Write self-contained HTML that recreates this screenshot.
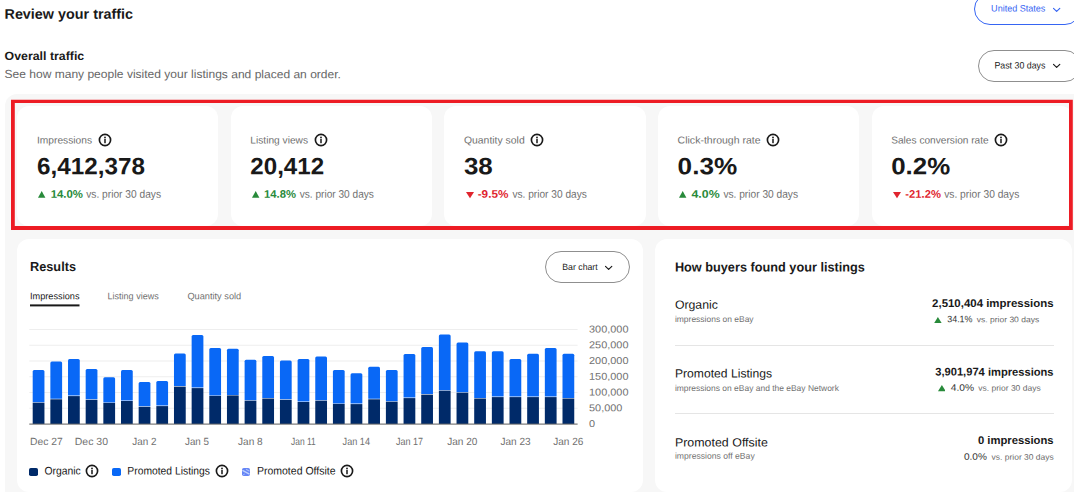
<!DOCTYPE html>
<html lang="en"><head><meta charset="utf-8"><title>Review your traffic</title>
<style>
html,body{margin:0;padding:0}
body{width:1074px;height:492px;position:relative;overflow:hidden;background:#fff;font-family:"Liberation Sans",sans-serif}
.a,.t,.pill,.card{position:absolute}
.t{white-space:nowrap}
.tx{font-family:"Liberation Sans",sans-serif;text-rendering:geometricPrecision;pointer-events:none}
.tx text{white-space:pre}
.pill{box-sizing:border-box;border:1px solid #8f8f8f;border-radius:16px;background:#fff}
.card{background:#fff;border-radius:12px}
.ii{position:absolute;top:-2px;margin-left:4.5px}
.lab{overflow:visible}
b{font-weight:700}
</style></head><body>
<div class="pill" style="left:974px;top:-7.5px;width:107px;height:32px;border-color:#3665f3"></div>
<svg class="a" style="left:1051.9px;top:6.5px" width="10" height="7" viewBox="-1 -1 10 7"><path d="M0.5 0.3 L3.65 3.4 L6.8 0.3" fill="none" stroke="#3665f3" stroke-width="1.15" stroke-linecap="round" stroke-linejoin="round"/></svg>
<div class="pill" style="left:977.7px;top:50px;width:103px;height:32px;border-color:#8f8f8f"></div>
<svg class="a" style="left:1051.9px;top:62.6px" width="10" height="7" viewBox="-1 -1 10 7"><path d="M0.5 0.3 L3.65 3.4 L6.8 0.3" fill="none" stroke="#191919" stroke-width="1.15" stroke-linecap="round" stroke-linejoin="round"/></svg>
<div class="a" style="left:4.5px;top:94px;width:1100px;height:420px;background:#f7f7f7;border-radius:12px"></div>
<div class="card" style="left:17.00px;top:106px;width:201.3px;height:119.8px"></div>
<svg class="a" style="left:97.7px;top:133.1px" width="14" height="14" viewBox="-7 -7 14 14"><circle r="5.6" fill="none" stroke="#191919" stroke-width="1.65"/><circle cy="-2.5" r="0.9" fill="#191919"/><rect x="-0.75" y="-1.0" width="1.5" height="4.2" fill="#191919"/></svg>
<svg class="a" style="left:38.40px;top:191.4px" width="7.4" height="7" viewBox="0 0 7.4 7"><path d="M3.7 0 L7.4 6.7 L0 6.7 Z" fill="#288a3a"/></svg>
<div class="card" style="left:230.65px;top:106px;width:201.3px;height:119.8px"></div>
<svg class="a" style="left:313.6px;top:133.1px" width="14" height="14" viewBox="-7 -7 14 14"><circle r="5.6" fill="none" stroke="#191919" stroke-width="1.65"/><circle cy="-2.5" r="0.9" fill="#191919"/><rect x="-0.75" y="-1.0" width="1.5" height="4.2" fill="#191919"/></svg>
<svg class="a" style="left:252.40px;top:191.4px" width="7.4" height="7" viewBox="0 0 7.4 7"><path d="M3.7 0 L7.4 6.7 L0 6.7 Z" fill="#288a3a"/></svg>
<div class="card" style="left:444.30px;top:106px;width:201.3px;height:119.8px"></div>
<svg class="a" style="left:529.8px;top:133.1px" width="14" height="14" viewBox="-7 -7 14 14"><circle r="5.6" fill="none" stroke="#191919" stroke-width="1.65"/><circle cy="-2.5" r="0.9" fill="#191919"/><rect x="-0.75" y="-1.0" width="1.5" height="4.2" fill="#191919"/></svg>
<svg class="a" style="left:465.70px;top:191.6px" width="8" height="7" viewBox="0 0 8 7"><path d="M0 0 L8 0 L4 6.2 Z" fill="#e0242e"/></svg>
<div class="card" style="left:657.95px;top:106px;width:201.3px;height:119.8px"></div>
<svg class="a" style="left:766.4px;top:133.1px" width="14" height="14" viewBox="-7 -7 14 14"><circle r="5.6" fill="none" stroke="#191919" stroke-width="1.65"/><circle cy="-2.5" r="0.9" fill="#191919"/><rect x="-0.75" y="-1.0" width="1.5" height="4.2" fill="#191919"/></svg>
<svg class="a" style="left:679.30px;top:191.4px" width="7.4" height="7" viewBox="0 0 7.4 7"><path d="M3.7 0 L7.4 6.7 L0 6.7 Z" fill="#288a3a"/></svg>
<div class="card" style="left:871.60px;top:106px;width:201.3px;height:119.8px"></div>
<svg class="a" style="left:994.2px;top:133.1px" width="14" height="14" viewBox="-7 -7 14 14"><circle r="5.6" fill="none" stroke="#191919" stroke-width="1.65"/><circle cy="-2.5" r="0.9" fill="#191919"/><rect x="-0.75" y="-1.0" width="1.5" height="4.2" fill="#191919"/></svg>
<svg class="a" style="left:893.00px;top:191.6px" width="8" height="7" viewBox="0 0 8 7"><path d="M0 0 L8 0 L4 6.2 Z" fill="#e0242e"/></svg>
<svg class="a" style="left:0;top:90px" width="1074" height="150" viewBox="0 90 1074 150"><path fill="#ed1c24" fill-rule="evenodd" d="M11 99.8 H1072.8 V229.9 H11 Z M14.8 103.1 V226 H1069 V103.1 Z"/></svg>
<div class="card" style="left:17px;top:238.6px;width:625.8px;height:253.4px"></div>
<svg class="a" style="left:28px;top:300px" width="56" height="10" viewBox="28 300 56 10"><rect x="30" y="304.4" width="49.5" height="2" fill="#191919"/></svg>
<div class="pill" style="left:544.9px;top:251.3px;width:85.3px;height:32px;border-color:#8f8f8f"></div>
<svg class="a" style="left:604.4px;top:264.8px" width="10" height="7" viewBox="-1 -1 10 7"><path d="M0.5 0.3 L3.65 3.4 L6.8 0.3" fill="none" stroke="#191919" stroke-width="1.15" stroke-linecap="round" stroke-linejoin="round"/></svg>
<svg class="a" style="left:0;top:320px" width="660" height="110" viewBox="0 320 660 110"><rect x="29.3" y="329.00" width="548.3" height="1" fill="#eeeeee"/><rect x="29.3" y="344.75" width="548.3" height="1" fill="#eeeeee"/><rect x="29.3" y="360.50" width="548.3" height="1" fill="#eeeeee"/><rect x="29.3" y="376.25" width="548.3" height="1" fill="#eeeeee"/><rect x="29.3" y="392.00" width="548.3" height="1" fill="#eeeeee"/><rect x="29.3" y="407.75" width="548.3" height="1" fill="#eeeeee"/><rect x="29.3" y="423.50" width="548.3" height="1" fill="#eeeeee"/><path d="M32.70 402.20 V371.50 Q32.70 370.00 34.20 370.00 H42.95 Q44.45 370.00 44.45 371.50 V402.20 Z" fill="#0968f6"/><rect x="32.70" y="402.70" width="11.75" height="21.30" fill="#002a69"/><path d="M50.36 398.80 V363.00 Q50.36 361.50 51.86 361.50 H60.61 Q62.11 361.50 62.11 363.00 V398.80 Z" fill="#0968f6"/><rect x="50.36" y="399.30" width="11.75" height="24.70" fill="#002a69"/><path d="M68.02 395.60 V360.50 Q68.02 359.00 69.52 359.00 H78.27 Q79.77 359.00 79.77 360.50 V395.60 Z" fill="#0968f6"/><rect x="68.02" y="396.10" width="11.75" height="27.90" fill="#002a69"/><path d="M85.68 399.30 V370.50 Q85.68 369.00 87.18 369.00 H95.93 Q97.43 369.00 97.43 370.50 V399.30 Z" fill="#0968f6"/><rect x="85.68" y="399.80" width="11.75" height="24.20" fill="#002a69"/><path d="M103.34 402.40 V378.80 Q103.34 377.30 104.84 377.30 H113.59 Q115.09 377.30 115.09 378.80 V402.40 Z" fill="#0968f6"/><rect x="103.34" y="402.90" width="11.75" height="21.10" fill="#002a69"/><path d="M121.00 400.50 V371.50 Q121.00 370.00 122.50 370.00 H131.25 Q132.75 370.00 132.75 371.50 V400.50 Z" fill="#0968f6"/><rect x="121.00" y="401.00" width="11.75" height="23.00" fill="#002a69"/><path d="M138.66 406.30 V383.50 Q138.66 382.00 140.16 382.00 H148.91 Q150.41 382.00 150.41 383.50 V406.30 Z" fill="#0968f6"/><rect x="138.66" y="406.80" width="11.75" height="17.20" fill="#002a69"/><path d="M156.32 405.60 V382.50 Q156.32 381.00 157.82 381.00 H166.57 Q168.07 381.00 168.07 382.50 V405.60 Z" fill="#0968f6"/><rect x="156.32" y="406.10" width="11.75" height="17.90" fill="#002a69"/><path d="M173.98 386.10 V354.90 Q173.98 353.40 175.48 353.40 H184.23 Q185.73 353.40 185.73 354.90 V386.10 Z" fill="#0968f6"/><rect x="173.98" y="386.60" width="11.75" height="37.40" fill="#002a69"/><path d="M191.64 387.60 V336.60 Q191.64 335.10 193.14 335.10 H201.89 Q203.39 335.10 203.39 336.60 V387.60 Z" fill="#0968f6"/><rect x="191.64" y="388.10" width="11.75" height="35.90" fill="#002a69"/><path d="M209.30 395.40 V349.50 Q209.30 348.00 210.80 348.00 H219.55 Q221.05 348.00 221.05 349.50 V395.40 Z" fill="#0968f6"/><rect x="209.30" y="395.90" width="11.75" height="28.10" fill="#002a69"/><path d="M226.96 394.90 V350.30 Q226.96 348.80 228.46 348.80 H237.21 Q238.71 348.80 238.71 350.30 V394.90 Z" fill="#0968f6"/><rect x="226.96" y="395.40" width="11.75" height="28.60" fill="#002a69"/><path d="M244.62 400.20 V361.30 Q244.62 359.80 246.12 359.80 H254.87 Q256.37 359.80 256.37 361.30 V400.20 Z" fill="#0968f6"/><rect x="244.62" y="400.70" width="11.75" height="23.30" fill="#002a69"/><path d="M262.28 398.00 V357.40 Q262.28 355.90 263.78 355.90 H272.53 Q274.03 355.90 274.03 357.40 V398.00 Z" fill="#0968f6"/><rect x="262.28" y="398.50" width="11.75" height="25.50" fill="#002a69"/><path d="M279.94 399.30 V362.00 Q279.94 360.50 281.44 360.50 H290.19 Q291.69 360.50 291.69 362.00 V399.30 Z" fill="#0968f6"/><rect x="279.94" y="399.80" width="11.75" height="24.20" fill="#002a69"/><path d="M297.60 401.50 V360.50 Q297.60 359.00 299.10 359.00 H307.85 Q309.35 359.00 309.35 360.50 V401.50 Z" fill="#0968f6"/><rect x="297.60" y="402.00" width="11.75" height="22.00" fill="#002a69"/><path d="M315.26 400.20 V358.10 Q315.26 356.60 316.76 356.60 H325.51 Q327.01 356.60 327.01 358.10 V400.20 Z" fill="#0968f6"/><rect x="315.26" y="400.70" width="11.75" height="23.30" fill="#002a69"/><path d="M332.92 403.40 V371.50 Q332.92 370.00 334.42 370.00 H343.17 Q344.67 370.00 344.67 371.50 V403.40 Z" fill="#0968f6"/><rect x="332.92" y="403.90" width="11.75" height="20.10" fill="#002a69"/><path d="M350.58 403.60 V374.70 Q350.58 373.20 352.08 373.20 H360.83 Q362.33 373.20 362.33 374.70 V403.60 Z" fill="#0968f6"/><rect x="350.58" y="404.10" width="11.75" height="19.90" fill="#002a69"/><path d="M368.24 398.80 V368.30 Q368.24 366.80 369.74 366.80 H378.49 Q379.99 366.80 379.99 368.30 V398.80 Z" fill="#0968f6"/><rect x="368.24" y="399.30" width="11.75" height="24.70" fill="#002a69"/><path d="M385.90 401.20 V371.50 Q385.90 370.00 387.40 370.00 H396.15 Q397.65 370.00 397.65 371.50 V401.20 Z" fill="#0968f6"/><rect x="385.90" y="401.70" width="11.75" height="22.30" fill="#002a69"/><path d="M403.56 397.60 V355.60 Q403.56 354.10 405.06 354.10 H413.81 Q415.31 354.10 415.31 355.60 V397.60 Z" fill="#0968f6"/><rect x="403.56" y="398.10" width="11.75" height="25.90" fill="#002a69"/><path d="M421.22 394.10 V348.60 Q421.22 347.10 422.72 347.10 H431.47 Q432.97 347.10 432.97 348.60 V394.10 Z" fill="#0968f6"/><rect x="421.22" y="394.60" width="11.75" height="29.40" fill="#002a69"/><path d="M438.88 390.20 V336.10 Q438.88 334.60 440.38 334.60 H449.13 Q450.63 334.60 450.63 336.10 V390.20 Z" fill="#0968f6"/><rect x="438.88" y="390.70" width="11.75" height="33.30" fill="#002a69"/><path d="M456.54 392.20 V343.90 Q456.54 342.40 458.04 342.40 H466.79 Q468.29 342.40 468.29 343.90 V392.20 Z" fill="#0968f6"/><rect x="456.54" y="392.70" width="11.75" height="31.30" fill="#002a69"/><path d="M474.20 398.00 V352.70 Q474.20 351.20 475.70 351.20 H484.45 Q485.95 351.20 485.95 352.70 V398.00 Z" fill="#0968f6"/><rect x="474.20" y="398.50" width="11.75" height="25.50" fill="#002a69"/><path d="M491.86 396.60 V352.70 Q491.86 351.20 493.36 351.20 H502.11 Q503.61 351.20 503.61 352.70 V396.60 Z" fill="#0968f6"/><rect x="491.86" y="397.10" width="11.75" height="26.90" fill="#002a69"/><path d="M509.52 396.60 V360.50 Q509.52 359.00 511.02 359.00 H519.77 Q521.27 359.00 521.27 360.50 V396.60 Z" fill="#0968f6"/><rect x="509.52" y="397.10" width="11.75" height="26.90" fill="#002a69"/><path d="M527.18 396.60 V355.20 Q527.18 353.70 528.68 353.70 H537.43 Q538.93 353.70 538.93 355.20 V396.60 Z" fill="#0968f6"/><rect x="527.18" y="397.10" width="11.75" height="26.90" fill="#002a69"/><path d="M544.84 396.60 V349.50 Q544.84 348.00 546.34 348.00 H555.09 Q556.59 348.00 556.59 349.50 V396.60 Z" fill="#0968f6"/><rect x="544.84" y="397.10" width="11.75" height="26.90" fill="#002a69"/><path d="M562.50 398.00 V355.20 Q562.50 353.70 564.00 353.70 H572.75 Q574.25 353.70 574.25 355.20 V398.00 Z" fill="#0968f6"/><rect x="562.50" y="398.50" width="11.75" height="25.50" fill="#002a69"/><rect x="29.3" y="423.60" width="548.3" height="1" fill="#666666"/></svg>
<div class="a" style="left:29.2px;top:467.7px;width:8.8px;height:8.4px;border-radius:1.8px;background:#002a69"></div>
<svg class="a" style="left:85.1px;top:464.2px" width="14" height="14" viewBox="-7 -7 14 14"><circle r="5.6" fill="none" stroke="#191919" stroke-width="1.65"/><circle cy="-2.5" r="0.9" fill="#191919"/><rect x="-0.75" y="-1.0" width="1.5" height="4.2" fill="#191919"/></svg>
<div class="a" style="left:112.1px;top:467.7px;width:8.8px;height:8.4px;border-radius:1.8px;background:#0968f6"></div>
<svg class="a" style="left:214.6px;top:464.2px" width="14" height="14" viewBox="-7 -7 14 14"><circle r="5.6" fill="none" stroke="#191919" stroke-width="1.65"/><circle cy="-2.5" r="0.9" fill="#191919"/><rect x="-0.75" y="-1.0" width="1.5" height="4.2" fill="#191919"/></svg>
<svg class="a" style="left:242.1px;top:467.9px" width="8" height="8" viewBox="0 0 8 8"><rect width="8" height="8" rx="1.8" fill="#6585f6"/><path d="M0.9 2.7 L7 5.9" stroke="#bfd2fc" stroke-width="1.4" stroke-linecap="round"/><path d="M4.4 1.4 L7.2 2.9" stroke="#a9c0fa" stroke-width="1.1" stroke-linecap="round"/><path d="M1.3 6.5 L2.6 6.1" stroke="#9db6fa" stroke-width="0.9" stroke-linecap="round"/></svg>
<svg class="a" style="left:339.9px;top:464.2px" width="14" height="14" viewBox="-7 -7 14 14"><circle r="5.6" fill="none" stroke="#191919" stroke-width="1.65"/><circle cy="-2.5" r="0.9" fill="#191919"/><rect x="-0.75" y="-1.0" width="1.5" height="4.2" fill="#191919"/></svg>
<div class="card" style="left:655.2px;top:238.6px;width:416.4px;height:253.4px"></div>
<svg class="a" style="left:933.8px;top:317.1px" width="7.8" height="6.3" viewBox="0 0 7.8 6.3"><path d="M3.9 0 L7.8 6.3 L0 6.3 Z" fill="#288a3a"/></svg>
<svg class="a" style="left:937.5px;top:385.40000000000003px" width="7.8" height="6.3" viewBox="0 0 7.8 6.3"><path d="M3.9 0 L7.8 6.3 L0 6.3 Z" fill="#288a3a"/></svg>
<div class="a" style="left:674.9px;top:345.4px;width:378.8px;height:1px;background:#e5e5e5"></div>
<div class="a" style="left:674.9px;top:413.3px;width:378.8px;height:1px;background:#e5e5e5"></div>
<svg class="a tx" style="left:0;top:0" width="1074" height="492" viewBox="0 0 1074 492">
<text transform="matrix(1.0266 0.0006 0 1 4.50 18.80)" font-size="14" font-weight="700" fill="#191919">Review your traffic</text>
<text transform="matrix(1.0289 0.0006 0 1 4.60 59.90)" font-size="12" font-weight="700" fill="#191919">Overall traffic</text>
<text transform="matrix(1.0199 0.0006 0 1 4.50 78.00)" font-size="11.8" fill="#666666">See how many people visited your listings and placed an order.</text>
<text transform="matrix(0.9726 0.0006 0 1 991.10 11.50)" font-size="9.3" fill="#3665f3">United States</text>
<text transform="matrix(0.9486 0.0006 0 1 994.40 68.50)" font-size="9.3" fill="#191919">Past 30 days</text>
<text transform="matrix(1.0203 0.0006 0 1 37.00 143.40)" font-size="10" fill="#707070">Impressions</text>
<text transform="matrix(1.0287 0.0006 0 1 37.00 174.20)" font-size="23.6" font-weight="700" fill="#191919">6,412,378</text>
<text transform="matrix(1.0356 0.0006 0 1 50.70 197.80)" font-size="11" font-weight="700" fill="#288a3a">14.0%</text>
<text transform="matrix(0.9269 0.0006 0 1 86.20 197.80)" font-size="11" fill="#707070">vs. prior 30 days</text>
<text transform="matrix(1.0178 0.0006 0 1 250.30 143.40)" font-size="10" fill="#707070">Listing views</text>
<text transform="matrix(1.0224 0.0006 0 1 250.30 174.20)" font-size="23.6" font-weight="700" fill="#191919">20,412</text>
<text transform="matrix(1.0228 0.0006 0 1 264.10 197.80)" font-size="11" font-weight="700" fill="#288a3a">14.8%</text>
<text transform="matrix(0.9194 0.0006 0 1 299.70 197.80)" font-size="11" fill="#707070">vs. prior 30 days</text>
<text transform="matrix(1.0417 0.0006 0 1 463.90 143.40)" font-size="10" fill="#707070">Quantity sold</text>
<text transform="matrix(1.1009 0.0006 0 1 463.90 174.20)" font-size="23.6" font-weight="700" fill="#191919">38</text>
<text transform="matrix(1.0684 0.0006 0 1 477.70 197.80)" font-size="11" font-weight="700" fill="#e0242e">-9.5%</text>
<text transform="matrix(0.9219 0.0006 0 1 512.40 197.80)" font-size="11" fill="#707070">vs. prior 30 days</text>
<text transform="matrix(1.0517 0.0006 0 1 677.60 143.40)" font-size="10" fill="#707070">Click-through rate</text>
<text transform="matrix(1.1080 0.0006 0 1 677.60 174.20)" font-size="23.6" font-weight="700" fill="#191919">0.3%</text>
<text transform="matrix(1.1208 0.0006 0 1 691.50 197.80)" font-size="11" font-weight="700" fill="#288a3a">4.0%</text>
<text transform="matrix(0.9244 0.0006 0 1 723.40 197.80)" font-size="11" fill="#707070">vs. prior 30 days</text>
<text transform="matrix(1.0139 0.0006 0 1 891.20 143.40)" font-size="10" fill="#707070">Sales conversion rate</text>
<text transform="matrix(1.0968 0.0006 0 1 891.20 174.20)" font-size="23.6" font-weight="700" fill="#191919">0.2%</text>
<text transform="matrix(1.0214 0.0006 0 1 905.30 197.80)" font-size="11" font-weight="700" fill="#e0242e">-21.2%</text>
<text transform="matrix(0.9306 0.0006 0 1 944.20 197.80)" font-size="11" fill="#707070">vs. prior 30 days</text>
<text transform="matrix(0.9796 0.0006 0 1 30.00 271.10)" font-size="13" font-weight="700" fill="#191919">Results</text>
<text transform="matrix(0.9874 0.0006 0 1 30.00 299.20)" font-size="9.3" fill="#191919">Impressions</text>
<text transform="matrix(0.9730 0.0006 0 1 107.50 299.20)" font-size="9.3" fill="#707070">Listing views</text>
<text transform="matrix(0.9912 0.0006 0 1 187.40 299.20)" font-size="9.3" fill="#707070">Quantity sold</text>
<text transform="matrix(0.9695 0.0006 0 1 562.30 270.00)" font-size="9" fill="#191919">Bar chart</text>
<text transform="matrix(1.0927 0.0006 0 1 589.00 332.60)" font-size="10" fill="#707070">300,000</text>
<text transform="matrix(1.0927 0.0006 0 1 589.00 348.35)" font-size="10" fill="#707070">250,000</text>
<text transform="matrix(1.0927 0.0006 0 1 589.00 364.10)" font-size="10" fill="#707070">200,000</text>
<text transform="matrix(1.0927 0.0006 0 1 589.00 379.85)" font-size="10" fill="#707070">150,000</text>
<text transform="matrix(1.0927 0.0006 0 1 589.00 395.60)" font-size="10" fill="#707070">100,000</text>
<text transform="matrix(1.0927 0.0006 0 1 589.00 411.35)" font-size="10" fill="#707070">50,000</text>
<text transform="matrix(1.0927 0.0006 0 1 589.00 427.10)" font-size="10" fill="#707070">0</text>
<text transform="matrix(0.9924 0.0006 0 1 30.00 444.90)" font-size="10.4" fill="#707070">Dec 27</text>
<text transform="matrix(1.0075 0.0006 0 1 74.80 444.90)" font-size="10.4" fill="#707070">Dec 30</text>
<text transform="matrix(0.9512 0.0006 0 1 132.30 444.90)" font-size="10.4" fill="#707070">Jan 2</text>
<text transform="matrix(0.9433 0.0006 0 1 185.00 444.90)" font-size="10.4" fill="#707070">Jan 5</text>
<text transform="matrix(0.9669 0.0006 0 1 238.10 444.90)" font-size="10.4" fill="#707070">Jan 8</text>
<text transform="matrix(0.8111 0.0006 0 1 291.00 444.90)" font-size="10.4" fill="#707070">Jan 11</text>
<text transform="matrix(0.8775 0.0006 0 1 342.60 444.90)" font-size="10.4" fill="#707070">Jan 14</text>
<text transform="matrix(0.8679 0.0006 0 1 395.90 444.90)" font-size="10.4" fill="#707070">Jan 17</text>
<text transform="matrix(0.9672 0.0006 0 1 447.20 444.90)" font-size="10.4" fill="#707070">Jan 20</text>
<text transform="matrix(0.9672 0.0006 0 1 500.40 444.90)" font-size="10.4" fill="#707070">Jan 23</text>
<text transform="matrix(0.9640 0.0006 0 1 553.20 444.90)" font-size="10.4" fill="#707070">Jan 26</text>
<text transform="matrix(0.9451 0.0006 0 1 44.40 474.40)" font-size="11" fill="#191919">Organic</text>
<text transform="matrix(0.9393 0.0006 0 1 127.30 474.40)" font-size="11" fill="#191919">Promoted Listings</text>
<text transform="matrix(0.9559 0.0006 0 1 256.90 474.40)" font-size="11" fill="#191919">Promoted Offsite</text>
<text transform="matrix(0.9779 0.0006 0 1 674.90 271.40)" font-size="13" font-weight="700" fill="#191919">How buyers found your listings</text>
<text transform="matrix(1.0234 0.0006 0 1 674.90 308.70)" font-size="12" fill="#191919">Organic</text>
<text transform="matrix(0.9975 0.0006 0 1 674.90 321.90)" font-size="8.5" fill="#707070">impressions on eBay</text>
<text transform="matrix(1.0226 0.0006 0 1 932.10 307.00)" font-size="11.2" font-weight="700" fill="#191919">2,510,404 impressions</text>
<text transform="matrix(0.9530 0.0006 0 1 947.20 322.30)" font-size="9.4" fill="#303030">34.1%</text>
<text transform="matrix(1.0501 0.0006 0 1 976.80 322.30)" font-size="8.1" fill="#686868">vs. prior 30 days</text>
<text transform="matrix(1.0120 0.0006 0 1 674.90 377.40)" font-size="12" fill="#191919">Promoted Listings</text>
<text transform="matrix(0.9946 0.0006 0 1 674.90 391.00)" font-size="8.5" fill="#707070">impressions on eBay and the eBay Network</text>
<text transform="matrix(0.9965 0.0006 0 1 935.20 375.60)" font-size="11.2" font-weight="700" fill="#191919">3,901,974 impressions</text>
<text transform="matrix(1.0922 0.0006 0 1 950.80 390.80)" font-size="9.4" fill="#303030">4.0%</text>
<text transform="matrix(1.0501 0.0006 0 1 978.30 390.80)" font-size="8.1" fill="#686868">vs. prior 30 days</text>
<text transform="matrix(1.0354 0.0006 0 1 674.90 446.40)" font-size="12" fill="#191919">Promoted Offsite</text>
<text transform="matrix(1.0134 0.0006 0 1 674.90 458.80)" font-size="8.5" fill="#707070">impressions off eBay</text>
<text transform="matrix(1.0064 0.0006 0 1 977.90 444.00)" font-size="11.2" font-weight="700" fill="#191919">0 impressions</text>
<text transform="matrix(1.0735 0.0006 0 1 963.90 459.80)" font-size="9.4" fill="#303030">0.0%</text>
<text transform="matrix(1.0467 0.0006 0 1 991.60 459.80)" font-size="8.1" fill="#686868">vs. prior 30 days</text>
</svg>
</body></html>
